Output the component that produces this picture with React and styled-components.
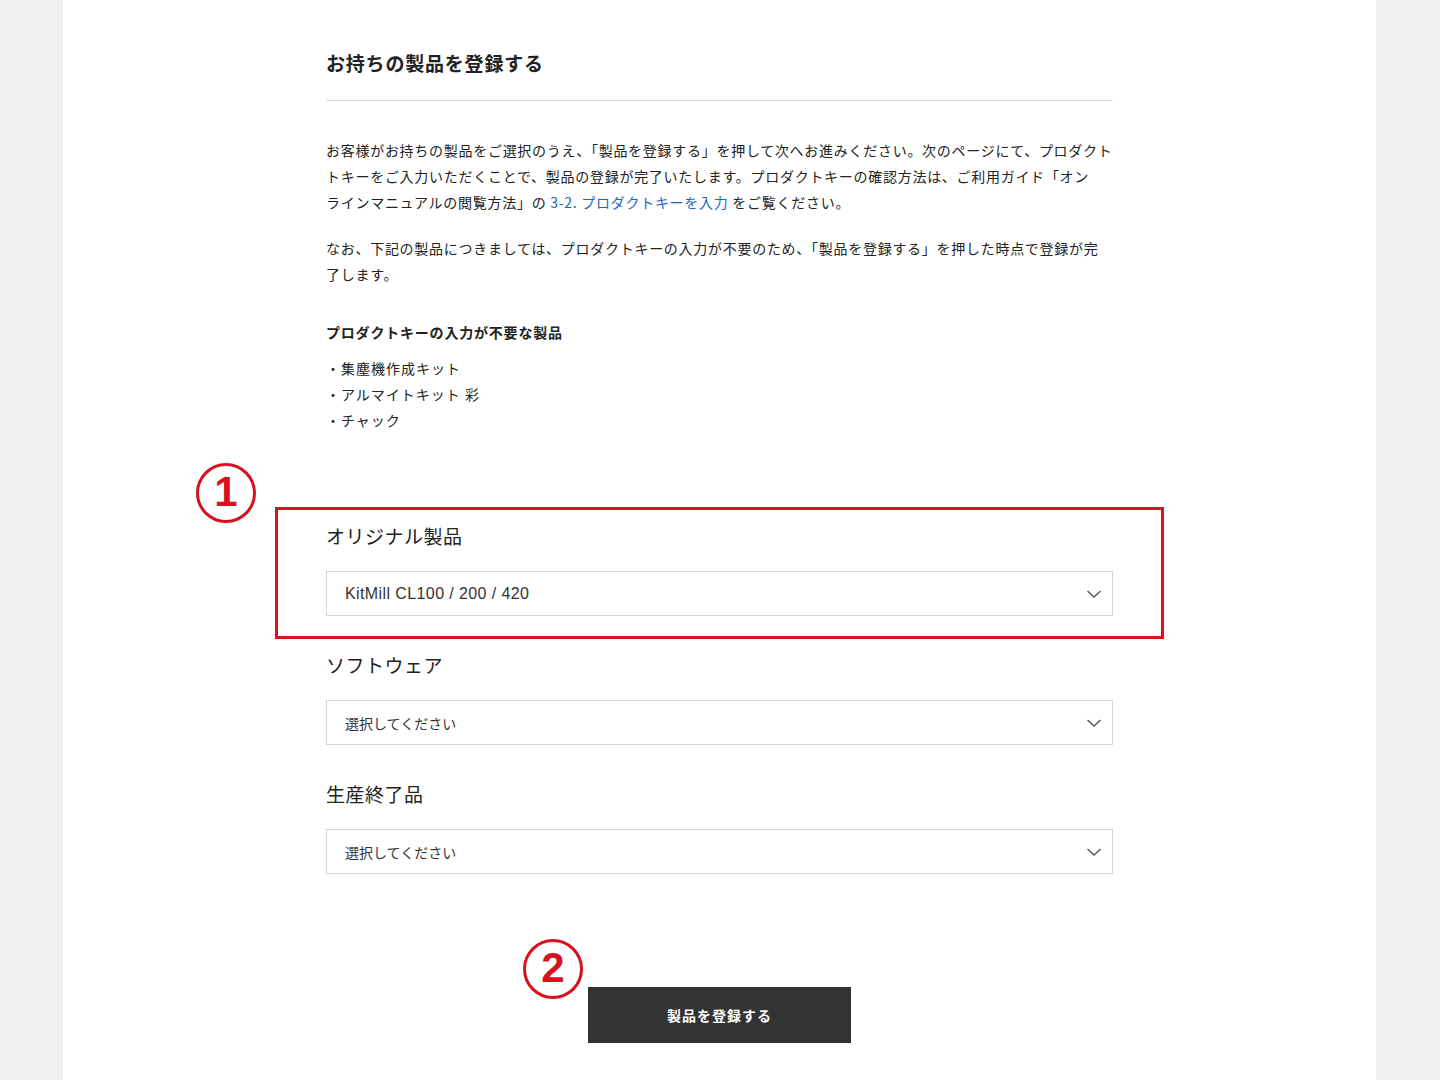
import React from "react";
import styled, { createGlobalStyle, css } from "styled-components";

const GlobalStyle = createGlobalStyle`
  body {
    margin: 0;
    background: #eff0f2;
    font-family: "Noto Sans CJK JP", "Noto Sans", sans-serif;
    color: #222;
  }
`;

const Page = styled.div`
  min-height: 1080px;
  padding: 0 64px 0 63px;
  box-sizing: border-box;
`;

const Panel = styled.main`
  background: #fff;
  min-height: 1080px;
  display: flex;
  justify-content: center;
`;

const Content = styled.div`
  width: 787px;
  padding: 50px 0 38px;
`;

const Title = styled.h1`
  margin: 0;
  font-size: 19px;
  line-height: 26px;
  font-weight: 700;
  letter-spacing: 0.8px;
`;

const Divider = styled.hr`
  margin: 24px 0 0;
  border: 0;
  height: 1px;
  background: #dcdcdc;
`;

const Paragraph = styled.p`
  margin: ${(p) => p.$top}px 0 0;
  font-size: 14px;
  line-height: 26px;
  letter-spacing: 0.72px;
  white-space: nowrap;
`;

const Link = styled.a`
  color: #1a66c0;
  text-decoration: none;
`;

const SubHeading = styled.h2`
  margin: 32px 0 0;
  font-size: 14px;
  line-height: 26px;
  font-weight: 700;
  letter-spacing: 0.8px;
`;

const List = styled.ul`
  margin: 10px 0 0;
  padding: 0;
  list-style: none;
  font-size: 14px;
  line-height: 26px;
  letter-spacing: 1px;
`;

const Fields = styled.div`
  margin-top: 89px;
  display: flex;
  flex-direction: column;
  gap: 35px;
`;

const FieldGroup = styled.section`
  position: relative;
  display: flex;
  flex-direction: column;
  gap: 21px;

  ${(p) =>
    p.$highlighted &&
    css`
      &::before {
        content: "";
        position: absolute;
        left: -51px;
        right: -51px;
        top: -15px;
        bottom: -23px;
        border: 3px solid #d5121e;
        pointer-events: none;
      }
    `}
`;

const FieldLabel = styled.h3`
  margin: 0;
  font-size: 19px;
  line-height: 28px;
  font-weight: 400;
  letter-spacing: 0.5px;
  color: #222;
`;

const SelectBox = styled.button`
  display: flex;
  align-items: center;
  justify-content: space-between;
  height: 45px;
  width: 100%;
  box-sizing: border-box;
  padding: 0 10px 0 18px;
  background: #fff;
  border: 1px solid #d3d6d9;
  font-family: "Liberation Sans", "Noto Sans CJK JP", sans-serif;
  font-size: ${(p) => (p.$filled ? "16px" : "14px")};
  letter-spacing: ${(p) => (p.$filled ? "0.4px" : "0")};
  color: #333;
  text-align: left;
  cursor: pointer;
`;

const Marker = styled.span`
  position: absolute;
  left: ${(p) => p.$left}px;
  top: ${(p) => p.$top}px;
  width: 60px;
  height: 60px;
  box-sizing: border-box;
  border: 3px solid #d5121e;
  border-radius: 50%;
  display: flex;
  align-items: center;
  justify-content: center;
  color: #d5121e;
  font-family: "Liberation Sans", Arial, sans-serif;
  font-weight: 700;
  font-size: 42px;
  line-height: 1;
  padding-bottom: 2px;
`;

const Actions = styled.div`
  margin-top: 113px;
  display: flex;
  justify-content: center;
`;

const SubmitWrap = styled.div`
  position: relative;
`;

const SubmitButton = styled.button`
  width: 263px;
  height: 56px;
  background: #333;
  color: #fff;
  border: 0;
  font-family: inherit;
  font-size: 14px;
  font-weight: 700;
  letter-spacing: 1px;
  cursor: pointer;
`;

const Chevron = () => (
  <svg width="16" height="10" viewBox="0 0 16 10" fill="none">
    <path d="M1.5 2l6.5 6 6.5-6" stroke="#555" strokeWidth="1.4" />
  </svg>
);

const fields = [
  { label: "オリジナル製品", value: "KitMill CL100 / 200 / 420", highlighted: true },
  { label: "ソフトウェア", value: null },
  { label: "生産終了品", value: null },
];

export default function App() {
  return (
    <>
      <GlobalStyle />
      <Page>
        <Panel>
          <Content>
            <Title>お持ちの製品を登録する</Title>
            <Divider />
            <Paragraph $top={36}>
              お客様がお持ちの製品をご選択のうえ、「製品を登録する」を押して次へお進みください。次のページにて、プロダクト
              <br />
              トキーをご入力いただくことで、製品の登録が完了いたします。プロダクトキーの確認方法は、ご利用ガイド「オン
              <br />
              ラインマニュアルの閲覧方法」の <Link href="#">3-2. プロダクトキーを入力</Link> をご覧ください。
            </Paragraph>
            <Paragraph $top={20}>
              なお、下記の製品につきましては、プロダクトキーの入力が不要のため、「製品を登録する」を押した時点で登録が完
              <br />
              了します。
            </Paragraph>
            <SubHeading>プロダクトキーの入力が不要な製品</SubHeading>
            <List>
              <li>・集塵機作成キット</li>
              <li>・アルマイトキット 彩</li>
              <li>・チャック</li>
            </List>

            <Fields>
              {fields.map((f) => (
                <FieldGroup key={f.label} $highlighted={f.highlighted}>
                  {f.highlighted && (
                    <Marker $left={-130} $top={-59}>
                      1
                    </Marker>
                  )}
                  <FieldLabel>{f.label}</FieldLabel>
                  <SelectBox type="button" $filled={!!f.value}>
                    <span>{f.value || "選択してください"}</span>
                    <Chevron />
                  </SelectBox>
                </FieldGroup>
              ))}
            </Fields>

            <Actions>
              <SubmitWrap>
                <Marker $left={-65} $top={-48}>
                  2
                </Marker>
                <SubmitButton type="button">製品を登録する</SubmitButton>
              </SubmitWrap>
            </Actions>
          </Content>
        </Panel>
      </Page>
    </>
  );
}
